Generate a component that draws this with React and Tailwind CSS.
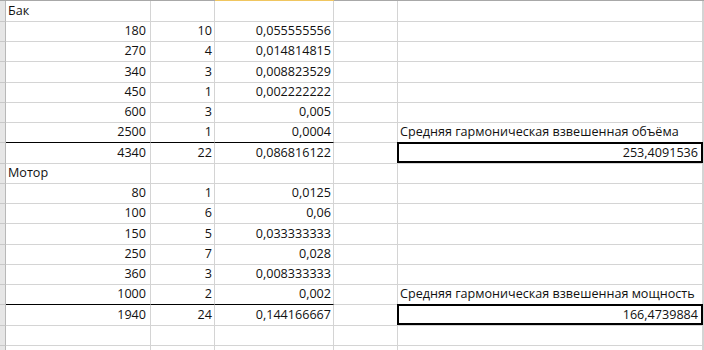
import React from "react";

// Excel-like sheet fragment
const rows = [
  { h: "h-[21px]", a: "Бак", label: true },
  { h: "h-[20px]", a: "180", b: "10", c: "0,055555556" },
  { h: "h-[20px]", a: "270", b: "4", c: "0,014814815" },
  { h: "h-[21px]", a: "340", b: "3", c: "0,008823529" },
  { h: "h-[20px]", a: "450", b: "1", c: "0,002222222" },
  { h: "h-[20px]", a: "600", b: "3", c: "0,005" },
  { h: "h-[20px]", a: "2500", b: "1", c: "0,0004", line: true, e: "Средняя гармоническая взвешенная объёма" },
  { h: "h-[21px]", a: "4340", b: "22", c: "0,086816122", box: "253,4091536" },
  { h: "h-[20px]", a: "Мотор", label: true },
  { h: "h-[20px]", a: "80", b: "1", c: "0,0125" },
  { h: "h-[20px]", a: "100", b: "6", c: "0,06" },
  { h: "h-[21px]", a: "150", b: "5", c: "0,033333333" },
  { h: "h-[20px]", a: "250", b: "7", c: "0,028" },
  { h: "h-[20px]", a: "360", b: "3", c: "0,008333333" },
  { h: "h-[20px]", a: "1000", b: "2", c: "0,002", line: true, e: "Средняя гармоническая взвешенная мощность" },
  { h: "h-[21px]", a: "1940", b: "24", c: "0,144166667", box: "166,4739884" },
  { h: "h-[20px]" },
  { h: "h-[20px]" },
];

const cell = "shrink-0 flex items-end border-r border-b border-[#d4d4d4] pb-[3px] overflow-visible whitespace-nowrap";

const Row = ({ r }) => {
  const lineB = r.line ? "border-b-black" : "";
  return (
    <div className={`flex ${r.h}`}>
      <div className="w-[6px] shrink-0 bg-[#e6e6e6] border-r border-b border-r-[#b8b8b8] border-b-[#c8c8c8]" />
      <div className={`${cell} w-[145px] ${lineB} ${r.label ? "justify-start pl-[2px]" : "justify-end pr-[4px]"}`}>
        {r.a}
      </div>
      <div className={`${cell} w-[64px] justify-end pr-[2px] ${lineB}`}>{r.b}</div>
      <div className={`${cell} w-[119px] justify-end pr-[2px] ${lineB}`}>{r.c}</div>
      <div className={`${cell} w-[64px]`} />
      <div className={`${cell} w-[305px] relative ${r.box ? "justify-end pr-[4px]" : "justify-start pl-[2px]"}`}>
        {r.box && (
          <div className="absolute -left-px -top-px w-[306px] h-[calc(100%+1px)] border-2 border-black" />
        )}
        <span className="relative">{r.e || r.box}</span>
      </div>
      <div className={`${cell} grow`} />
    </div>
  );
};

export default function App() {
  return (
    <div
      className="w-[704px] h-[350px] overflow-hidden bg-white text-[12.6px] leading-[14px] text-[#111]"
      style={{ fontFamily: '"Open Sans", "Liberation Sans", sans-serif' }}
    >
      <div className="flex h-px">
        <div className="w-[215px] bg-[#a8a8a8]" />
        <div className="w-[119px] bg-[#f0c660]" />
        <div className="grow bg-[#a8a8a8]" />
      </div>
      {rows.map((r, i) => (
        <Row key={i} r={r} />
      ))}
    </div>
  );
}
